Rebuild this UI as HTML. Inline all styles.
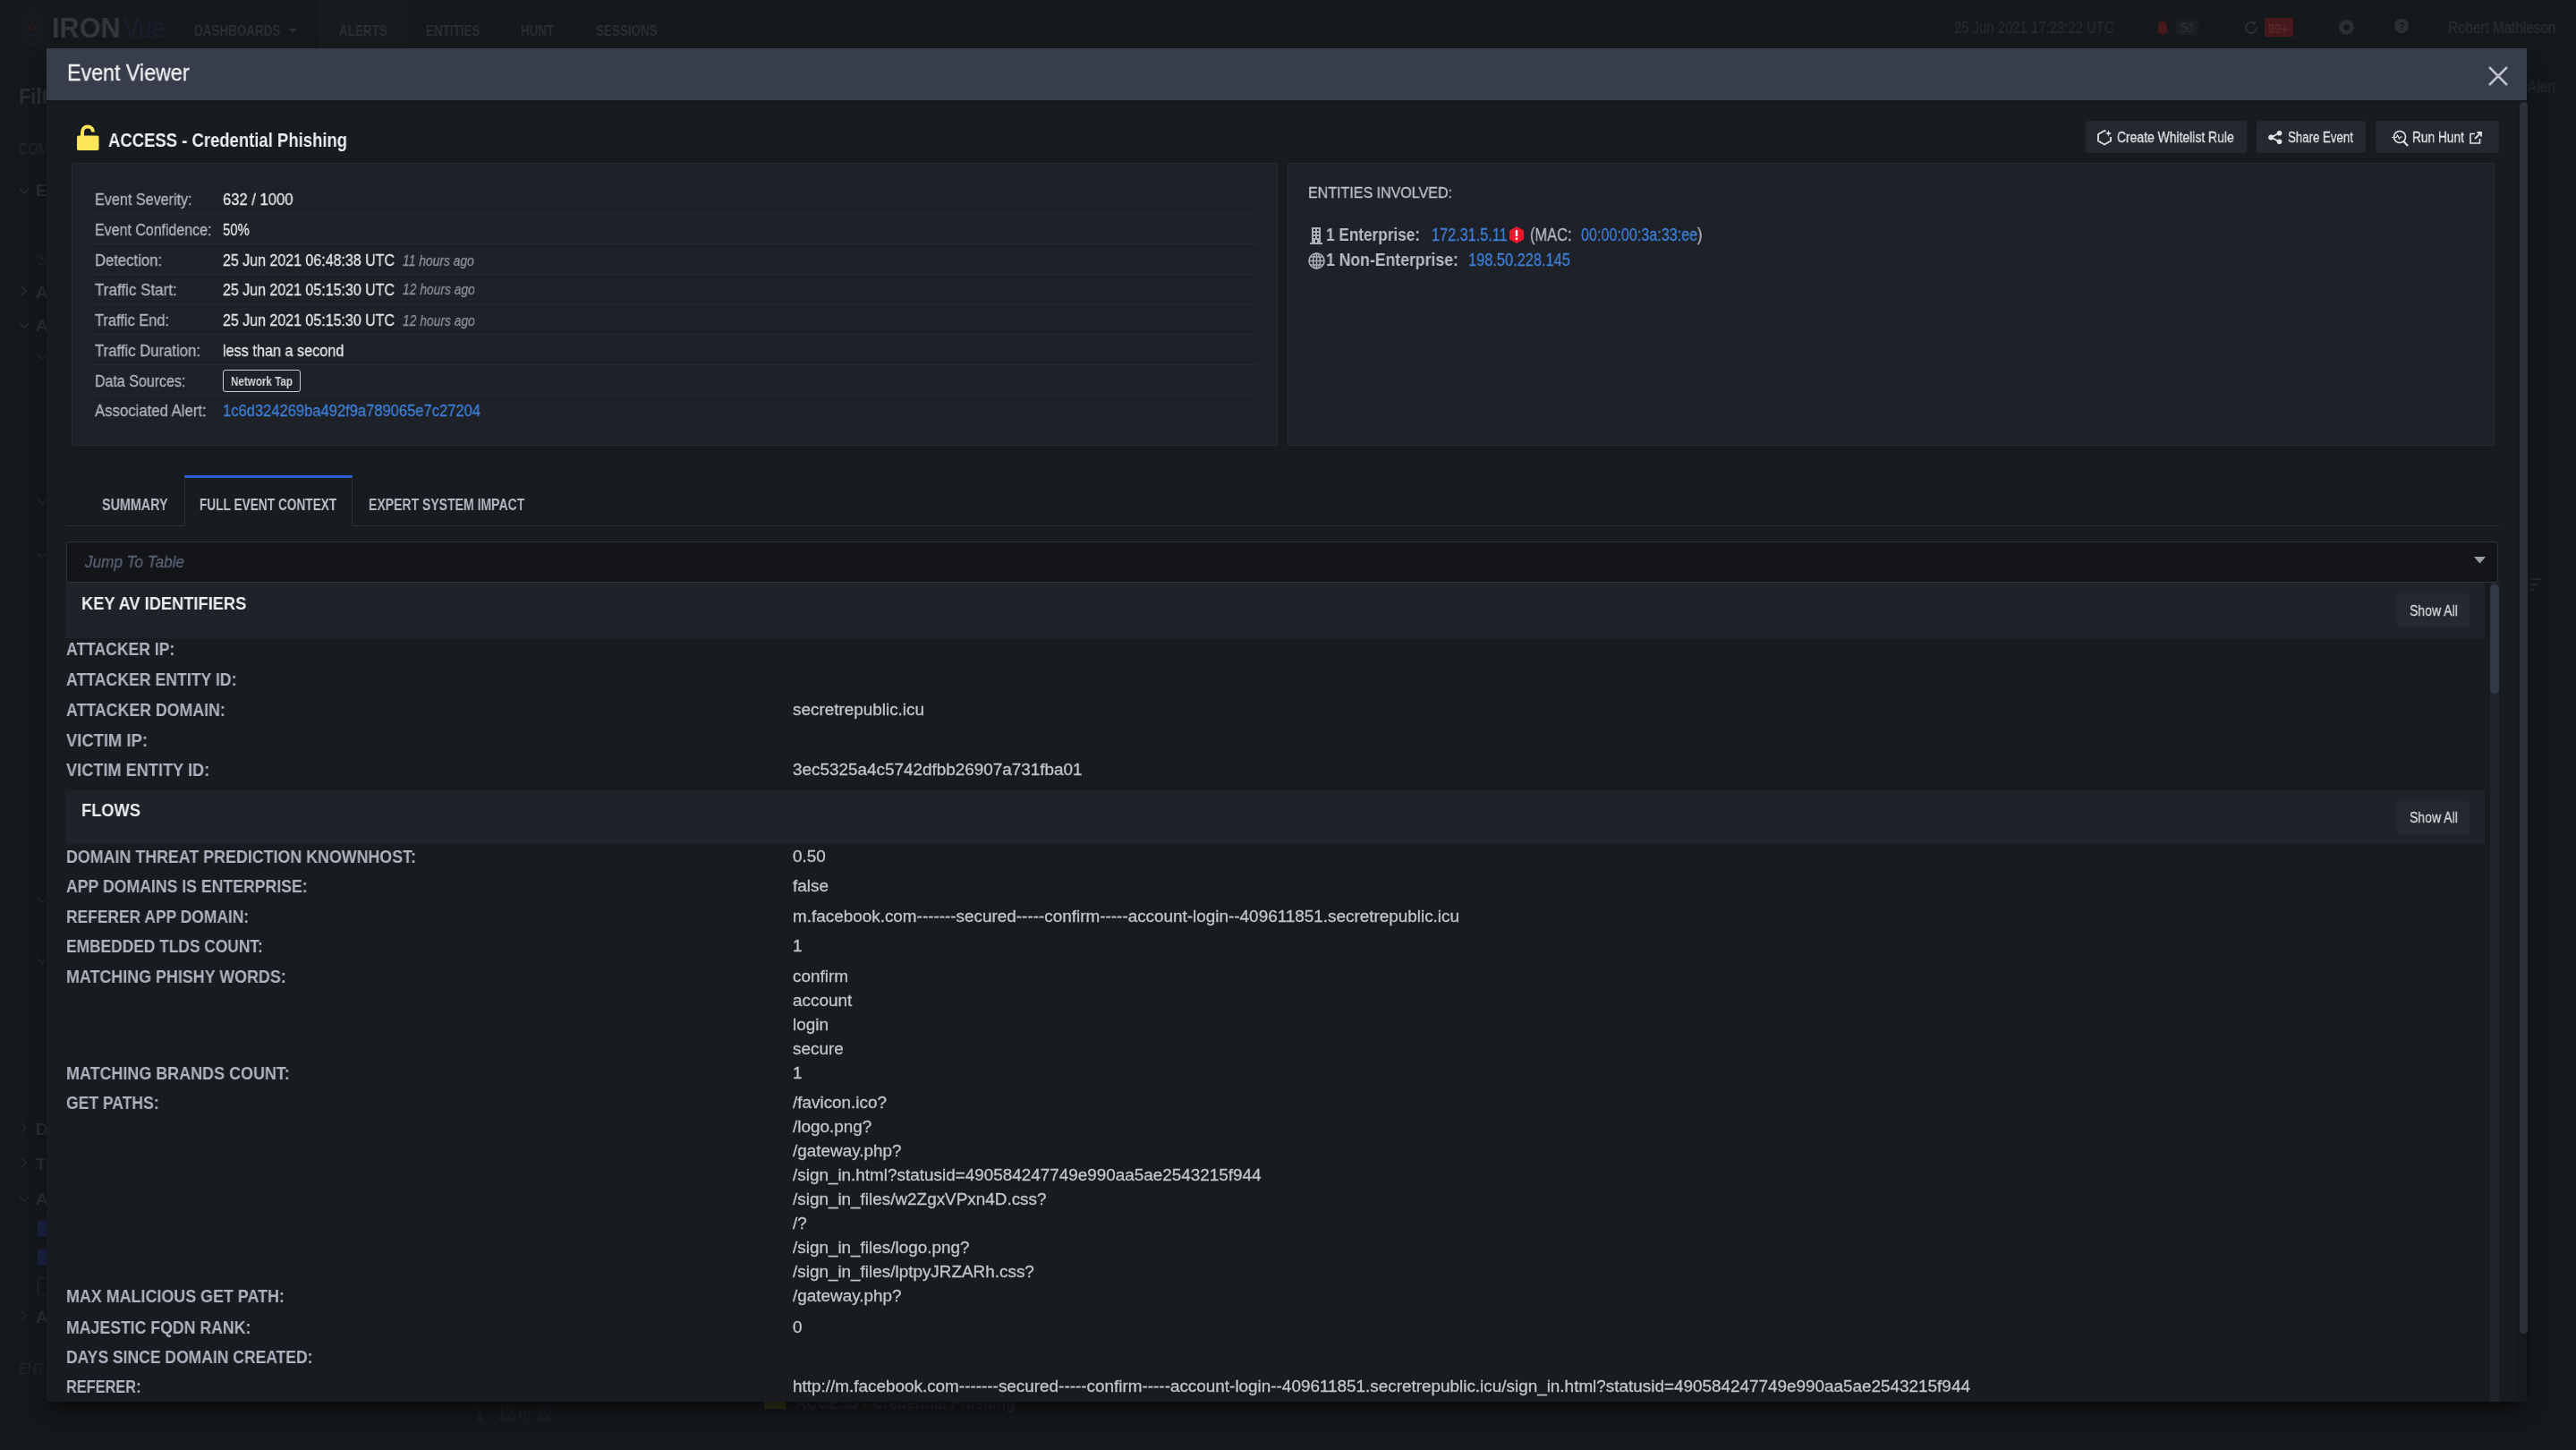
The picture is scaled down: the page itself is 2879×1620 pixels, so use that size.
<!DOCTYPE html><html><head><meta charset="utf-8"><style>
html,body{margin:0;padding:0;}
body{width:2879px;height:1620px;overflow:hidden;position:relative;background:#15181b;font-family:"Liberation Sans",sans-serif;}
.t{position:absolute;white-space:pre;line-height:1;transform-origin:0 0;will-change:transform;}
.r{position:absolute;}
svg{position:absolute;overflow:visible;}
</style></head><body>
<div class="r" style="left:0.00px;top:0.00px;width:2879.00px;height:54.00px;background:#16191c;"></div>
<svg style="left:19px;top:9px" width="33" height="43" viewBox="0 0 33 43"><g fill="none" stroke="#1a202b" stroke-width="1.3" stroke-dasharray="2.5 1.5"><polygon points="16.5,1 32,10.5 32,32.5 16.5,42 1,32.5 1,10.5"/><polygon points="16.5,6.5 27,13 27,30 16.5,36.5 6,30 6,13"/><polygon points="16.5,12 22.5,15.5 22.5,27.5 16.5,31 10.5,27.5 10.5,15.5"/></g><circle cx="16.5" cy="21.5" r="3.2" fill="none" stroke="#2c1a1c" stroke-width="1.5"/></svg>
<div class="t" style="left:58.00px;top:15.76px;font-size:31.00px;color:#34373b;font-weight:700;transform:scaleX(0.9900);">IRON</div>
<div class="t" style="left:138.00px;top:15.76px;font-size:31.00px;color:#19202e;font-weight:400;-webkit-text-stroke:0.3px #19202e;transform:scaleX(0.8600);">Vue</div>
<div class="r" style="left:357.00px;top:0.00px;width:97.00px;height:54.00px;background:#181b1e;border-left:1px solid #1b1e21;border-right:1px solid #1b1e21;"></div>
<div class="t" style="left:217.00px;top:25.81px;font-size:17.00px;color:#2b2f34;font-weight:700;transform:scaleX(0.7900);">DASHBOARDS</div>
<div class="t" style="left:378.60px;top:25.81px;font-size:17.00px;color:#2b2f34;font-weight:700;transform:scaleX(0.7900);">ALERTS</div>
<div class="t" style="left:475.50px;top:25.81px;font-size:17.00px;color:#2b2f34;font-weight:700;transform:scaleX(0.7900);">ENTITIES</div>
<div class="t" style="left:582.00px;top:25.81px;font-size:17.00px;color:#2b2f34;font-weight:700;transform:scaleX(0.7900);">HUNT</div>
<div class="t" style="left:665.60px;top:25.81px;font-size:17.00px;color:#2b2f34;font-weight:700;transform:scaleX(0.7900);">SESSIONS</div>
<svg style="left:323px;top:32px" width="9" height="5"><polygon points="0,0 9,0 4.5,5" fill="#2b2f34"/></svg>
<div class="t" style="left:2183.70px;top:22.89px;font-size:17.50px;color:#282b30;font-weight:400;-webkit-text-stroke:0.3px #282b30;transform:scaleX(0.8500);">25 Jun 2021 17:23:22 UTC</div>
<svg style="left:2410px;top:23px" width="14" height="17" viewBox="0 0 14 17"><path d="M7 0c1 0 1.5.7 1.5 1.4C11 2 12 4.5 12 7v4l2 2.5H0L2 11V7c0-2.5 1-5 3.5-5.6C5.5.7 6 0 7 0zM5 14.5h4a2 2 0 0 1-4 0z" fill="#4a1a1b"/></svg>
<div class="r" style="left:2432.00px;top:21.00px;width:25.00px;height:18.00px;background:#1b1e22;border-radius:2px;"></div>
<div class="t" style="left:2437.00px;top:23.30px;font-size:15.00px;color:#30343a;font-weight:400;-webkit-text-stroke:0.3px #30343a;transform:scaleX(0.8500);">50</div>
<svg style="left:2507px;top:22px" width="18" height="18" viewBox="0 0 18 18"><path d="M15 9a6 6 0 1 1-3-5.2" fill="none" stroke="#2c3036" stroke-width="2"/><path d="M11 1l4 2-3 3z" fill="#2c3036"/></svg>
<div class="r" style="left:2530.60px;top:19.50px;width:32.40px;height:21.00px;background:#461a1c;border-radius:2px;"></div>
<div class="t" style="left:2535.00px;top:23.80px;font-size:15.00px;color:#5e2a2e;font-weight:400;-webkit-text-stroke:0.3px #5e2a2e;transform:scaleX(0.8500);">99+</div>
<svg style="left:2613px;top:21px" width="19" height="19" viewBox="0 0 20 20"><path d="M10 0l2 2.5 3-1 .5 3 3 .5-1 3L20 10l-2.5 2 1 3-3 .5-.5 3-3-1L10 20l-2-2.5-3 1-.5-3-3-.5 1-3L0 10l2.5-2-1-3 3-.5.5-3 3 1z" fill="#2c2f34"/><circle cx="10" cy="10" r="3.5" fill="#16191c"/></svg>
<svg style="left:2676px;top:21px" width="16" height="16" viewBox="0 0 16 16"><circle cx="8" cy="8" r="8" fill="#2c2f34"/><text x="8" y="12.5" font-size="12" font-weight="700" text-anchor="middle" fill="#16191c" font-family="Liberation Sans">?</text></svg>
<div class="t" style="left:2736.00px;top:22.89px;font-size:17.50px;color:#2a2d32;font-weight:400;-webkit-text-stroke:0.3px #2a2d32;transform:scaleX(0.8700);">Robert Mathieson</div>
<div class="t" style="left:21.00px;top:97.03px;font-size:23.00px;color:#2b2e32;font-weight:700;transform:scaleX(0.9500);">Filt</div>
<div class="t" style="left:21.00px;top:157.61px;font-size:17.00px;color:#25282c;font-weight:400;-webkit-text-stroke:0.3px #25282c;transform:scaleX(0.8500);">COM</div>
<div class="t" style="left:40.00px;top:202.92px;font-size:19.00px;color:#2a2d31;font-weight:700;">E</div>
<svg style="left:21px;top:210px" width="12" height="7"><path d="M1 1l5 5 5-5" fill="none" stroke="#2a2d31" stroke-width="1.5"/></svg>
<div class="t" style="left:42.00px;top:281.61px;font-size:17.00px;color:#22252a;font-weight:400;font-style:italic;-webkit-text-stroke:0.3px #22252a;">S</div>
<div class="t" style="left:40.00px;top:316.92px;font-size:19.00px;color:#2a2d31;font-weight:700;">A</div>
<svg style="left:23px;top:319px" width="7" height="12"><path d="M1 1l5 5-5 5" fill="none" stroke="#2a2d31" stroke-width="1.5"/></svg>
<div class="t" style="left:40.00px;top:353.92px;font-size:19.00px;color:#2a2d31;font-weight:700;">A</div>
<svg style="left:21px;top:360px" width="12" height="7"><path d="M1 1l5 5 5-5" fill="none" stroke="#2a2d31" stroke-width="1.5"/></svg>
<svg style="left:41px;top:395px" width="12" height="7"><path d="M1 1l5 5 5-5" fill="none" stroke="#25282c" stroke-width="1.5"/></svg>
<svg style="left:41px;top:557px" width="12" height="7"><path d="M1 1l5 5 5-5" fill="none" stroke="#25282c" stroke-width="1.5"/></svg>
<svg style="left:41px;top:617px" width="12" height="7"><path d="M1 1l5 5 5-5" fill="none" stroke="#25282c" stroke-width="1.5"/></svg>
<svg style="left:41px;top:1002px" width="12" height="7"><path d="M1 1l5 5 5-5" fill="none" stroke="#25282c" stroke-width="1.5"/></svg>
<svg style="left:41px;top:1070px" width="12" height="7"><path d="M1 1l5 5 5-5" fill="none" stroke="#25282c" stroke-width="1.5"/></svg>
<div class="t" style="left:40.00px;top:1251.92px;font-size:19.00px;color:#2a2d31;font-weight:700;">D</div>
<svg style="left:23px;top:1254px" width="7" height="12"><path d="M1 1l5 5-5 5" fill="none" stroke="#25282c" stroke-width="1.5"/></svg>
<div class="t" style="left:40.00px;top:1290.92px;font-size:19.00px;color:#2a2d31;font-weight:700;">T</div>
<svg style="left:23px;top:1293px" width="7" height="12"><path d="M1 1l5 5-5 5" fill="none" stroke="#25282c" stroke-width="1.5"/></svg>
<div class="t" style="left:40.00px;top:1329.92px;font-size:19.00px;color:#2a2d31;font-weight:700;">A</div>
<svg style="left:21px;top:1336px" width="12" height="7"><path d="M1 1l5 5 5-5" fill="none" stroke="#25282c" stroke-width="1.5"/></svg>
<div class="t" style="left:40.00px;top:1461.92px;font-size:19.00px;color:#2a2d31;font-weight:700;">A</div>
<svg style="left:23px;top:1464px" width="7" height="12"><path d="M1 1l5 5-5 5" fill="none" stroke="#25282c" stroke-width="1.5"/></svg>
<div class="t" style="left:21.00px;top:1520.61px;font-size:17.00px;color:#22252a;font-weight:400;-webkit-text-stroke:0.3px #22252a;transform:scaleX(0.8500);">ENT</div>
<div class="r" style="left:42.00px;top:1363.00px;width:18.00px;height:19.00px;background:#1a2240;border-radius:2px;"></div>
<div class="r" style="left:42.00px;top:1395.00px;width:18.00px;height:19.00px;background:#1a2240;border-radius:2px;"></div>
<div class="r" style="left:42.00px;top:1427.00px;width:18.00px;height:20.00px;background:none;border:1.5px solid #25282c;box-sizing:border-box;border-radius:2px;"></div>
<div class="t" style="left:531.00px;top:1569.92px;font-size:19.00px;color:#202226;font-weight:400;-webkit-text-stroke:0.3px #202226;transform:scaleX(0.9000);">1 - 12 of 12</div>
<div class="r" style="left:854.00px;top:1561.00px;width:24.00px;height:13.00px;background:#35321a;"></div>
<div class="t" style="left:889.00px;top:1557.07px;font-size:20.00px;color:#25272b;font-weight:700;transform:scaleX(0.8500);">ACCESS - Credential Phishing</div>
<div class="t" style="left:2825.00px;top:88.69px;font-size:17.50px;color:#24272b;font-weight:400;-webkit-text-stroke:0.3px #24272b;transform:scaleX(0.8800);">Alert</div>
<div class="r" style="left:2828.00px;top:646.00px;width:11.00px;height:2.00px;background:#26292d;"></div>
<div class="r" style="left:2828.00px;top:652.00px;width:8.00px;height:2.00px;background:#26292d;"></div>
<div class="r" style="left:2828.00px;top:658.00px;width:4.00px;height:2.00px;background:#26292d;"></div>
<div class="r" style="left:402.00px;top:1566.00px;width:1.00px;height:54.00px;background:#191b1f;"></div>
<div class="r" style="left:752.00px;top:1566.00px;width:1.00px;height:54.00px;background:#191b1f;"></div>
<div class="r" style="left:52px;top:54px;width:2772px;height:1512px;box-shadow:0 12px 18px -4px rgba(0,0,0,0.6);background:#181b20"></div>
<div class="r" style="left:52.00px;top:54.00px;width:2772.00px;height:58.00px;background:#373d4a;"></div>
<div class="r" style="left:52.00px;top:112.00px;width:2761.00px;height:6.00px;background:linear-gradient(rgba(0,0,0,0.22),rgba(0,0,0,0));"></div>
<div class="t" style="left:75.30px;top:68.84px;font-size:25.00px;color:#eceef0;font-weight:400;-webkit-text-stroke:0.3px #eceef0;transform:scaleX(0.9300);">Event Viewer</div>
<svg style="left:2781px;top:74px" width="22" height="22" viewBox="0 0 22 22"><path d="M1 1L21 21M21 1L1 21" stroke="#bfc4cb" stroke-width="2.5"/></svg>
<div class="r" style="left:2813.00px;top:112.00px;width:11.00px;height:1454.00px;background:#16191d;"></div>
<div class="r" style="left:2816.00px;top:114.00px;width:9.00px;height:1376.00px;background:#2a2f38;border-radius:5px;"></div>
<svg style="left:86px;top:139px" width="25" height="29" viewBox="0 0 25 29"><path d="M6 14V8.5A6 6 0 0 1 18 8.5" fill="none" stroke="#fbe65a" stroke-width="4"/><rect x="0" y="12.5" width="24.5" height="16.5" rx="1.8" fill="#fbe65a"/></svg>
<div class="t" style="left:121.00px;top:145.75px;font-size:21.80px;color:#eceef0;font-weight:700;transform:scaleX(0.8480);">ACCESS - Credential Phishing</div>
<div class="r" style="left:2331.00px;top:135.00px;width:180.00px;height:35.50px;background:#242930;border-radius:3px;"></div>
<div class="t" style="left:2366.00px;top:144.57px;font-size:17.40px;color:#dfe2e6;font-weight:400;-webkit-text-stroke:0.3px #dfe2e6;transform:scaleX(0.8000);">Create Whitelist Rule</div>
<div class="r" style="left:2522.00px;top:135.00px;width:122.00px;height:35.50px;background:#242930;border-radius:3px;"></div>
<div class="t" style="left:2557.00px;top:144.57px;font-size:17.40px;color:#dfe2e6;font-weight:400;-webkit-text-stroke:0.3px #dfe2e6;transform:scaleX(0.7610);">Share Event</div>
<div class="r" style="left:2655.00px;top:135.00px;width:138.00px;height:35.50px;background:#242930;border-radius:3px;"></div>
<div class="t" style="left:2696.00px;top:144.57px;font-size:17.40px;color:#dfe2e6;font-weight:400;-webkit-text-stroke:0.3px #dfe2e6;transform:scaleX(0.7870);">Run Hunt</div>
<svg style="left:2344px;top:145px" width="16" height="17" viewBox="0 0 16 17"><path d="M9.5 1.8L8 1 1 5v7.5L8 16.5l7-4V8" fill="none" stroke="#dfe2e6" stroke-width="1.8" stroke-linejoin="round"/><path d="M12.5 0.5l1 2.5 2.5 1-2.5 1-1 2.5-1-2.5-2.5-1 2.5-1z" fill="#dfe2e6"/></svg>
<svg style="left:2535px;top:146px" width="16" height="15" viewBox="0 0 16 15"><path d="M12.5 2.5L3.5 7.5l9 5" fill="none" stroke="#dfe2e6" stroke-width="1.8"/><circle cx="12.5" cy="2.8" r="2.8" fill="#dfe2e6"/><circle cx="3.2" cy="7.5" r="3" fill="#dfe2e6"/><circle cx="12.5" cy="12.2" r="2.8" fill="#dfe2e6"/></svg>
<svg style="left:2673px;top:145px" width="19" height="19" viewBox="0 0 19 19"><circle cx="9" cy="8" r="6.5" fill="none" stroke="#dfe2e6" stroke-width="1.6"/><path d="M13.5 13l4.5 5" stroke="#dfe2e6" stroke-width="2"/><path d="M0 8.5h5l1.5-2.5 2 4 1.5-2h2" fill="none" stroke="#dfe2e6" stroke-width="1.2"/></svg>
<svg style="left:2760px;top:147px" width="14" height="14" viewBox="0 0 14 14"><path d="M6 2.5H1v10.5h10.5V8" fill="none" stroke="#dfe2e6" stroke-width="1.6"/><path d="M6 8L13 1M8.5 1H13v4.5" fill="none" stroke="#dfe2e6" stroke-width="1.8"/></svg>
<div class="r" style="left:80.00px;top:182.00px;width:1348.00px;height:316.00px;background:#1e2127;box-sizing:border-box;border:1px solid #262a30;"></div>
<div class="t" style="left:106.00px;top:214.12px;font-size:18.40px;color:#afb5bf;font-weight:400;-webkit-text-stroke:0.3px #afb5bf;transform:scaleX(0.8785);">Event Severity:</div>
<div class="t" style="left:106.00px;top:247.92px;font-size:18.40px;color:#afb5bf;font-weight:400;-webkit-text-stroke:0.3px #afb5bf;transform:scaleX(0.8679);">Event Confidence:</div>
<div class="t" style="left:106.00px;top:282.02px;font-size:18.40px;color:#afb5bf;font-weight:400;-webkit-text-stroke:0.3px #afb5bf;transform:scaleX(0.9058);">Detection:</div>
<div class="t" style="left:106.00px;top:314.62px;font-size:18.40px;color:#afb5bf;font-weight:400;-webkit-text-stroke:0.3px #afb5bf;transform:scaleX(0.9252);">Traffic Start:</div>
<div class="t" style="left:106.00px;top:348.72px;font-size:18.40px;color:#afb5bf;font-weight:400;-webkit-text-stroke:0.3px #afb5bf;transform:scaleX(0.8917);">Traffic End:</div>
<div class="t" style="left:106.00px;top:383.22px;font-size:18.40px;color:#afb5bf;font-weight:400;-webkit-text-stroke:0.3px #afb5bf;transform:scaleX(0.9084);">Traffic Duration:</div>
<div class="t" style="left:106.00px;top:416.82px;font-size:18.40px;color:#afb5bf;font-weight:400;-webkit-text-stroke:0.3px #afb5bf;transform:scaleX(0.8696);">Data Sources:</div>
<div class="t" style="left:106.00px;top:450.22px;font-size:18.40px;color:#afb5bf;font-weight:400;-webkit-text-stroke:0.3px #afb5bf;transform:scaleX(0.9102);">Associated Alert:</div>
<div class="r" style="left:102.00px;top:238.00px;width:1303.00px;height:1.00px;background:#262a32;"></div>
<div class="r" style="left:102.00px;top:272.00px;width:1303.00px;height:1.00px;background:#262a32;"></div>
<div class="r" style="left:102.00px;top:306.00px;width:1303.00px;height:1.00px;background:#262a32;"></div>
<div class="r" style="left:102.00px;top:339.00px;width:1303.00px;height:1.00px;background:#262a32;"></div>
<div class="r" style="left:102.00px;top:373.00px;width:1303.00px;height:1.00px;background:#262a32;"></div>
<div class="r" style="left:102.00px;top:407.00px;width:1303.00px;height:1.00px;background:#262a32;"></div>
<div class="r" style="left:102.00px;top:441.00px;width:1303.00px;height:1.00px;background:#262a32;"></div>
<div class="t" style="left:249.00px;top:214.12px;font-size:18.40px;color:#e4e6e9;font-weight:400;-webkit-text-stroke:0.3px #e4e6e9;transform:scaleX(0.9021);">632 / 1000</div>
<div class="t" style="left:249.00px;top:247.92px;font-size:18.40px;color:#e4e6e9;font-weight:400;-webkit-text-stroke:0.3px #e4e6e9;transform:scaleX(0.8100);">50%</div>
<div class="t" style="left:249.00px;top:282.02px;font-size:18.40px;color:#e4e6e9;font-weight:400;-webkit-text-stroke:0.3px #e4e6e9;transform:scaleX(0.8695);">25 Jun 2021 06:48:38 UTC</div>
<div class="t" style="left:249.00px;top:314.62px;font-size:18.40px;color:#e4e6e9;font-weight:400;-webkit-text-stroke:0.3px #e4e6e9;transform:scaleX(0.8695);">25 Jun 2021 05:15:30 UTC</div>
<div class="t" style="left:249.00px;top:348.72px;font-size:18.40px;color:#e4e6e9;font-weight:400;-webkit-text-stroke:0.3px #e4e6e9;transform:scaleX(0.8695);">25 Jun 2021 05:15:30 UTC</div>
<div class="t" style="left:450.00px;top:282.87px;font-size:17.40px;color:#8a8f97;font-weight:400;font-style:italic;-webkit-text-stroke:0.3px #8a8f97;transform:scaleX(0.7960);">11 hours ago</div>
<div class="t" style="left:450.00px;top:315.47px;font-size:17.40px;color:#8a8f97;font-weight:400;font-style:italic;-webkit-text-stroke:0.3px #8a8f97;transform:scaleX(0.7960);">12 hours ago</div>
<div class="t" style="left:450.00px;top:349.57px;font-size:17.40px;color:#8a8f97;font-weight:400;font-style:italic;-webkit-text-stroke:0.3px #8a8f97;transform:scaleX(0.7960);">12 hours ago</div>
<div class="t" style="left:249.00px;top:383.22px;font-size:18.40px;color:#e4e6e9;font-weight:400;-webkit-text-stroke:0.3px #e4e6e9;transform:scaleX(0.8821);">less than a second</div>
<div class="r" style="left:249px;top:412.7px;width:87px;height:25px;box-sizing:border-box;border:1.6px solid #c6c9ce;border-radius:3px;"></div>
<div class="t" style="left:257.50px;top:418.98px;font-size:14.20px;color:#d0d3d7;font-weight:700;transform:scaleX(0.8200);">Network Tap</div>
<div class="t" style="left:249.00px;top:449.80px;font-size:18.90px;color:#3f7fd9;font-weight:400;-webkit-text-stroke:0.3px #3f7fd9;transform:scaleX(0.8760);">1c6d324269ba492f9a789065e7c27204</div>
<div class="r" style="left:1439.00px;top:182.00px;width:1349.00px;height:316.00px;background:#1e2127;box-sizing:border-box;border:1px solid #262a30;"></div>
<div class="t" style="left:1462.00px;top:207.27px;font-size:17.40px;color:#c0c4ca;font-weight:400;-webkit-text-stroke:0.3px #c0c4ca;transform:scaleX(0.9220);">ENTITIES INVOLVED:</div>
<svg style="left:1464px;top:254px" width="14" height="19" viewBox="0 0 14 19"><rect x="2" y="0" width="10" height="17" fill="#a9b0ba"/><rect x="0" y="17" width="14" height="2" fill="#a9b0ba"/><g fill="#1e2127"><rect x="4" y="2" width="2" height="2"/><rect x="8" y="2" width="2" height="2"/><rect x="4" y="6" width="2" height="2"/><rect x="8" y="6" width="2" height="2"/><rect x="4" y="10" width="2" height="2"/><rect x="8" y="10" width="2" height="2"/><rect x="6" y="14" width="2" height="3"/></g></svg>
<div class="t" style="left:1482.00px;top:253.24px;font-size:19.80px;color:#b5bbc4;font-weight:700;transform:scaleX(0.8690);">1 Enterprise:</div>
<div class="t" style="left:1599.50px;top:253.24px;font-size:19.80px;color:#3f7fd9;font-weight:400;-webkit-text-stroke:0.3px #3f7fd9;transform:scaleX(0.8210);">172.31.5.11</div>
<svg style="left:1686px;top:253px" width="18" height="19" viewBox="0 0 18 19"><polygon points="9,0 17,4.5 17,14.5 9,19 1,14.5 1,4.5" fill="#e8192c"/><rect x="7.8" y="4" width="2.4" height="7" fill="#fff"/><rect x="7.8" y="12.5" width="2.4" height="2.4" fill="#fff"/></svg>
<div class="t" style="left:1710.00px;top:253.24px;font-size:19.80px;color:#b5bbc4;font-weight:400;-webkit-text-stroke:0.3px #b5bbc4;transform:scaleX(0.8300);">(MAC:</div>
<div class="t" style="left:1766.50px;top:253.24px;font-size:19.80px;color:#3f7fd9;font-weight:400;-webkit-text-stroke:0.3px #3f7fd9;transform:scaleX(0.8160);">00:00:00:3a:33:ee</div>
<div class="t" style="left:1897.00px;top:253.24px;font-size:19.80px;color:#b5bbc4;font-weight:400;-webkit-text-stroke:0.3px #b5bbc4;transform:scaleX(0.8300);">)</div>
<svg style="left:1462px;top:282px" width="19" height="19" viewBox="0 0 19 19"><g fill="none" stroke="#a9b0ba" stroke-width="1.6"><circle cx="9.5" cy="9.5" r="8.5"/><ellipse cx="9.5" cy="9.5" rx="4" ry="8.5"/><path d="M1 9.5h17M2.5 5h14M2.5 14h14M9.5 1v17"/></g></svg>
<div class="t" style="left:1482.00px;top:281.24px;font-size:19.80px;color:#b5bbc4;font-weight:700;transform:scaleX(0.8900);">1 Non-Enterprise:</div>
<div class="t" style="left:1641.00px;top:281.24px;font-size:19.80px;color:#3f7fd9;font-weight:400;-webkit-text-stroke:0.3px #3f7fd9;transform:scaleX(0.8280);">198.50.228.145</div>
<div class="r" style="left:74.00px;top:586.50px;width:2719.00px;height:1.00px;background:#2a2e35;"></div>
<div class="r" style="left:206px;top:531px;width:188px;height:57px;box-sizing:border-box;border:1px solid #2a2e35;border-bottom:none;border-top:3px solid #2f5fd6;background:#181b20"></div>
<div class="t" style="left:113.60px;top:554.89px;font-size:18.20px;color:#b2b8c2;font-weight:700;transform:scaleX(0.7880);">SUMMARY</div>
<div class="t" style="left:223.00px;top:554.89px;font-size:18.20px;color:#bcc1ca;font-weight:700;transform:scaleX(0.7520);">FULL EVENT CONTEXT</div>
<div class="t" style="left:412.00px;top:554.89px;font-size:18.20px;color:#b2b8c2;font-weight:700;transform:scaleX(0.7710);">EXPERT SYSTEM IMPACT</div>
<div class="r" style="left:74px;top:605px;width:2718px;height:45.5px;box-sizing:border-box;border:1px solid #2c313a;border-radius:3px;background:#131519"></div>
<div class="t" style="left:95.00px;top:618.60px;font-size:18.90px;color:#5a6476;font-weight:400;font-style:italic;-webkit-text-stroke:0.3px #5a6476;transform:scaleX(0.9060);">Jump To Table</div>
<svg style="left:2765px;top:622px" width="13" height="7.5"><polygon points="0,0 13,0 6.5,7.5" fill="#9a9da2"/></svg>
<div class="r" style="left:2783.00px;top:651.00px;width:10.00px;height:915.00px;background:#20242b;"></div>
<div class="r" style="left:2783.00px;top:653.00px;width:10.00px;height:122.00px;background:#343a45;border-radius:5px;"></div>
<div class="r" style="left:73.00px;top:651.00px;width:2704.00px;height:61.60px;background:#1f2228;"></div>
<div class="t" style="left:91.00px;top:663.82px;font-size:20.30px;color:#eceef0;font-weight:700;transform:scaleX(0.9000);">KEY AV IDENTIFIERS</div>
<div class="r" style="left:2679.00px;top:663.00px;width:81.00px;height:37.00px;background:#242930;border-radius:3px;"></div>
<div class="t" style="left:2693.00px;top:673.87px;font-size:17.40px;color:#d6d9dd;font-weight:400;-webkit-text-stroke:0.3px #d6d9dd;transform:scaleX(0.8070);">Show All</div>
<div class="t" style="left:73.60px;top:716.29px;font-size:19.50px;color:#acb3bf;font-weight:700;transform:scaleX(0.9001);">ATTACKER IP:</div>
<div class="t" style="left:73.60px;top:750.29px;font-size:19.50px;color:#acb3bf;font-weight:700;transform:scaleX(0.9064);">ATTACKER ENTITY ID:</div>
<div class="t" style="left:73.60px;top:783.79px;font-size:19.50px;color:#acb3bf;font-weight:700;transform:scaleX(0.9105);">ATTACKER DOMAIN:</div>
<div class="t" style="left:885.50px;top:783.50px;font-size:18.90px;color:#c2c5ca;font-weight:400;-webkit-text-stroke:0.3px #c2c5ca;">secretrepublic.icu</div>
<div class="t" style="left:73.60px;top:817.79px;font-size:19.50px;color:#acb3bf;font-weight:700;transform:scaleX(0.9422);">VICTIM IP:</div>
<div class="t" style="left:73.60px;top:851.29px;font-size:19.50px;color:#acb3bf;font-weight:700;transform:scaleX(0.9320);">VICTIM ENTITY ID:</div>
<div class="t" style="left:885.50px;top:851.00px;font-size:18.90px;color:#c2c5ca;font-weight:400;-webkit-text-stroke:0.3px #c2c5ca;">3ec5325a4c5742dfbb26907a731fba01</div>
<div class="r" style="left:73.00px;top:882.50px;width:2704.00px;height:60.50px;background:#1f2228;"></div>
<div class="t" style="left:91.00px;top:894.82px;font-size:20.30px;color:#eceef0;font-weight:700;transform:scaleX(0.9000);">FLOWS</div>
<div class="r" style="left:2679.00px;top:894.50px;width:81.00px;height:37.00px;background:#242930;border-radius:3px;"></div>
<div class="t" style="left:2693.00px;top:905.37px;font-size:17.40px;color:#d6d9dd;font-weight:400;-webkit-text-stroke:0.3px #d6d9dd;transform:scaleX(0.8070);">Show All</div>
<div class="t" style="left:73.60px;top:947.79px;font-size:19.50px;color:#acb3bf;font-weight:700;transform:scaleX(0.9145);">DOMAIN THREAT PREDICTION KNOWNHOST:</div>
<div class="t" style="left:885.50px;top:947.50px;font-size:18.90px;color:#c2c5ca;font-weight:400;-webkit-text-stroke:0.3px #c2c5ca;">0.50</div>
<div class="t" style="left:73.60px;top:981.29px;font-size:19.50px;color:#acb3bf;font-weight:700;transform:scaleX(0.9062);">APP DOMAINS IS ENTERPRISE:</div>
<div class="t" style="left:885.50px;top:981.00px;font-size:18.90px;color:#c2c5ca;font-weight:400;-webkit-text-stroke:0.3px #c2c5ca;">false</div>
<div class="t" style="left:73.60px;top:1014.79px;font-size:19.50px;color:#acb3bf;font-weight:700;transform:scaleX(0.8933);">REFERER APP DOMAIN:</div>
<div class="t" style="left:885.50px;top:1014.50px;font-size:18.90px;color:#c2c5ca;font-weight:400;-webkit-text-stroke:0.3px #c2c5ca;">m.facebook.com-------secured-----confirm-----account-login--409611851.secretrepublic.icu</div>
<div class="t" style="left:73.60px;top:1048.29px;font-size:19.50px;color:#acb3bf;font-weight:700;transform:scaleX(0.8900);">EMBEDDED TLDS COUNT:</div>
<div class="t" style="left:885.50px;top:1048.00px;font-size:18.90px;color:#c2c5ca;font-weight:400;-webkit-text-stroke:0.3px #c2c5ca;">1</div>
<div class="t" style="left:73.60px;top:1081.99px;font-size:19.50px;color:#acb3bf;font-weight:700;transform:scaleX(0.9172);">MATCHING PHISHY WORDS:</div>
<div class="t" style="left:885.50px;top:1081.70px;font-size:18.90px;color:#c2c5ca;font-weight:400;-webkit-text-stroke:0.3px #c2c5ca;">confirm</div>
<div class="t" style="left:885.50px;top:1108.70px;font-size:18.90px;color:#c2c5ca;font-weight:400;-webkit-text-stroke:0.3px #c2c5ca;">account</div>
<div class="t" style="left:885.50px;top:1135.70px;font-size:18.90px;color:#c2c5ca;font-weight:400;-webkit-text-stroke:0.3px #c2c5ca;">login</div>
<div class="t" style="left:885.50px;top:1162.70px;font-size:18.90px;color:#c2c5ca;font-weight:400;-webkit-text-stroke:0.3px #c2c5ca;">secure</div>
<div class="t" style="left:73.60px;top:1190.29px;font-size:19.50px;color:#acb3bf;font-weight:700;transform:scaleX(0.9198);">MATCHING BRANDS COUNT:</div>
<div class="t" style="left:885.50px;top:1190.00px;font-size:18.90px;color:#c2c5ca;font-weight:400;-webkit-text-stroke:0.3px #c2c5ca;">1</div>
<div class="t" style="left:73.60px;top:1223.29px;font-size:19.50px;color:#acb3bf;font-weight:700;transform:scaleX(0.8995);">GET PATHS:</div>
<div class="t" style="left:885.50px;top:1223.00px;font-size:18.90px;color:#c2c5ca;font-weight:400;-webkit-text-stroke:0.3px #c2c5ca;">/favicon.ico?</div>
<div class="t" style="left:885.50px;top:1250.00px;font-size:18.90px;color:#c2c5ca;font-weight:400;-webkit-text-stroke:0.3px #c2c5ca;">/logo.png?</div>
<div class="t" style="left:885.50px;top:1277.00px;font-size:18.90px;color:#c2c5ca;font-weight:400;-webkit-text-stroke:0.3px #c2c5ca;">/gateway.php?</div>
<div class="t" style="left:885.50px;top:1304.00px;font-size:18.90px;color:#c2c5ca;font-weight:400;-webkit-text-stroke:0.3px #c2c5ca;">/sign_in.html?statusid=490584247749e990aa5ae2543215f944</div>
<div class="t" style="left:885.50px;top:1331.00px;font-size:18.90px;color:#c2c5ca;font-weight:400;-webkit-text-stroke:0.3px #c2c5ca;">/sign_in_files/w2ZgxVPxn4D.css?</div>
<div class="t" style="left:885.50px;top:1358.00px;font-size:18.90px;color:#c2c5ca;font-weight:400;-webkit-text-stroke:0.3px #c2c5ca;">/?</div>
<div class="t" style="left:885.50px;top:1385.00px;font-size:18.90px;color:#c2c5ca;font-weight:400;-webkit-text-stroke:0.3px #c2c5ca;">/sign_in_files/logo.png?</div>
<div class="t" style="left:885.50px;top:1412.00px;font-size:18.90px;color:#c2c5ca;font-weight:400;-webkit-text-stroke:0.3px #c2c5ca;">/sign_in_files/lptpyJRZARh.css?</div>
<div class="t" style="left:73.60px;top:1439.29px;font-size:19.50px;color:#acb3bf;font-weight:700;transform:scaleX(0.9176);">MAX MALICIOUS GET PATH:</div>
<div class="t" style="left:885.50px;top:1439.00px;font-size:18.90px;color:#c2c5ca;font-weight:400;-webkit-text-stroke:0.3px #c2c5ca;">/gateway.php?</div>
<div class="t" style="left:73.60px;top:1473.79px;font-size:19.50px;color:#acb3bf;font-weight:700;transform:scaleX(0.9070);">MAJESTIC FQDN RANK:</div>
<div class="t" style="left:885.50px;top:1473.50px;font-size:18.90px;color:#c2c5ca;font-weight:400;-webkit-text-stroke:0.3px #c2c5ca;">0</div>
<div class="t" style="left:73.60px;top:1506.79px;font-size:19.50px;color:#acb3bf;font-weight:700;transform:scaleX(0.8986);">DAYS SINCE DOMAIN CREATED:</div>
<div class="r" style="left:52px;top:1530px;width:2731px;height:36px;overflow:hidden;">
<div class="t" style="left:21.60px;top:10.49px;font-size:19.50px;color:#acb3bf;font-weight:700;transform:scaleX(0.8383);">REFERER:</div>
<div class="t" style="left:833.50px;top:10.20px;font-size:18.90px;color:#c2c5ca;font-weight:400;-webkit-text-stroke:0.3px #c2c5ca;">http://m.facebook.com-------secured-----confirm-----account-login--409611851.secretrepublic.icu/sign_in.html?statusid=490584247749e990aa5ae2543215f944</div>
</div>
</body></html>
